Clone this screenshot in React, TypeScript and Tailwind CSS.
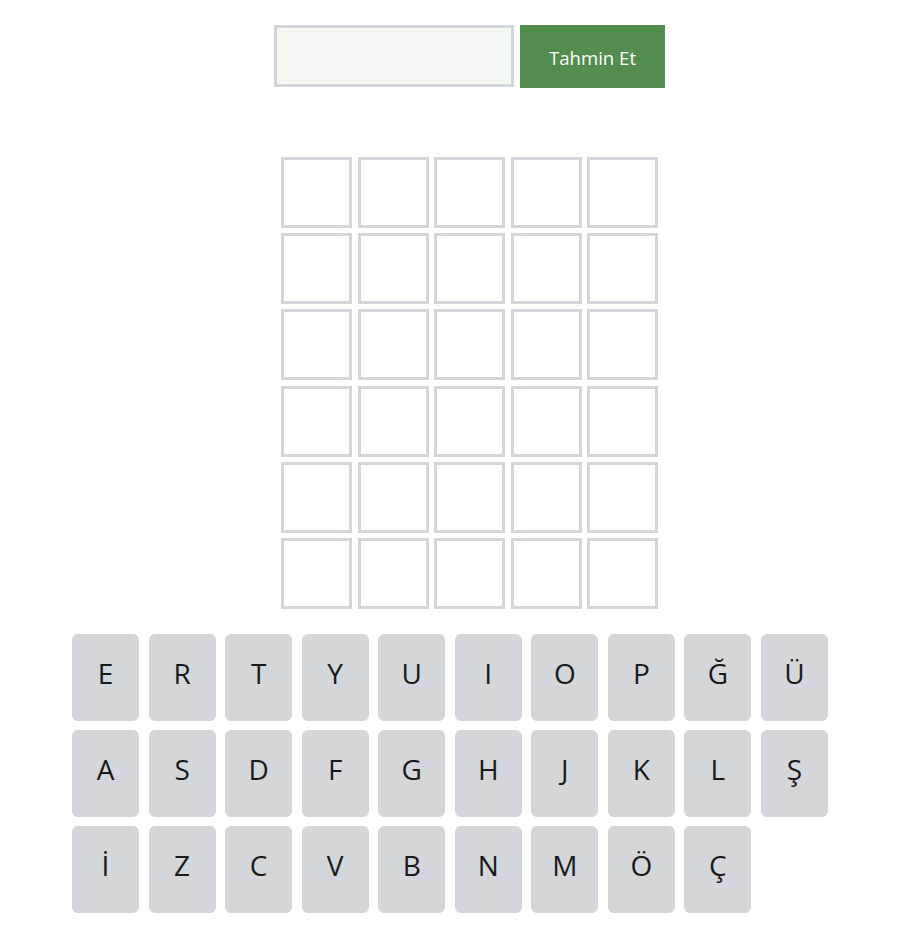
import React from "react";

const rows = [
  ["E", "R", "T", "Y", "U", "I", "O", "P", "Ğ", "Ü"],
  ["A", "S", "D", "F", "G", "H", "J", "K", "L", "Ş"],
  ["İ", "Z", "C", "V", "B", "N", "M", "Ö", "Ç"],
];

export default function App() {
  return (
    <div
      className="min-h-[941px] w-full bg-white"
      style={{ fontFamily: '"Open Sans", "Noto Sans", sans-serif' }}
    >
      <div className="flex justify-center pl-[37px] pt-[25px]">
        <div className="flex items-start gap-[6px]">
          <input
            className="h-[62px] w-[240px] border-[3px] border-[#d3d6da] bg-[#f3f9f2] outline-none"
            type="text"
          />
          <button className="h-[63px] w-[145px] bg-[#528d4e] pt-[3px] text-[18.6px] text-white">
            Tahmin Et
          </button>
        </div>
      </div>

      <div className="mt-[69px] flex justify-center pl-[37px]">
        <div className="grid grid-cols-5 gap-x-[5.5px] gap-y-[5.2px]">
          {Array.from({ length: 30 }).map((_, i) => (
            <div
              key={i}
              className="h-[71px] w-[71px] border-[3px] border-[#d3d6da] bg-white"
            />
          ))}
        </div>
      </div>

      <div className="mt-[25px] flex justify-center pr-[2px]">
        <div className="flex w-[756px] flex-col gap-[9px]">
          {rows.map((row, ri) => (
            <div key={ri} className="grid grid-cols-10 gap-x-[9.5px]">
              {row.map((k) => (
                <div
                  key={k}
                  className="flex h-[87px] items-center justify-center rounded-[6px] bg-[#d3d6da] pb-[9px] text-[28px] text-[#1a1a1b]"
                >
                  {k}
                </div>
              ))}
            </div>
          ))}
        </div>
      </div>
    </div>
  );
}
